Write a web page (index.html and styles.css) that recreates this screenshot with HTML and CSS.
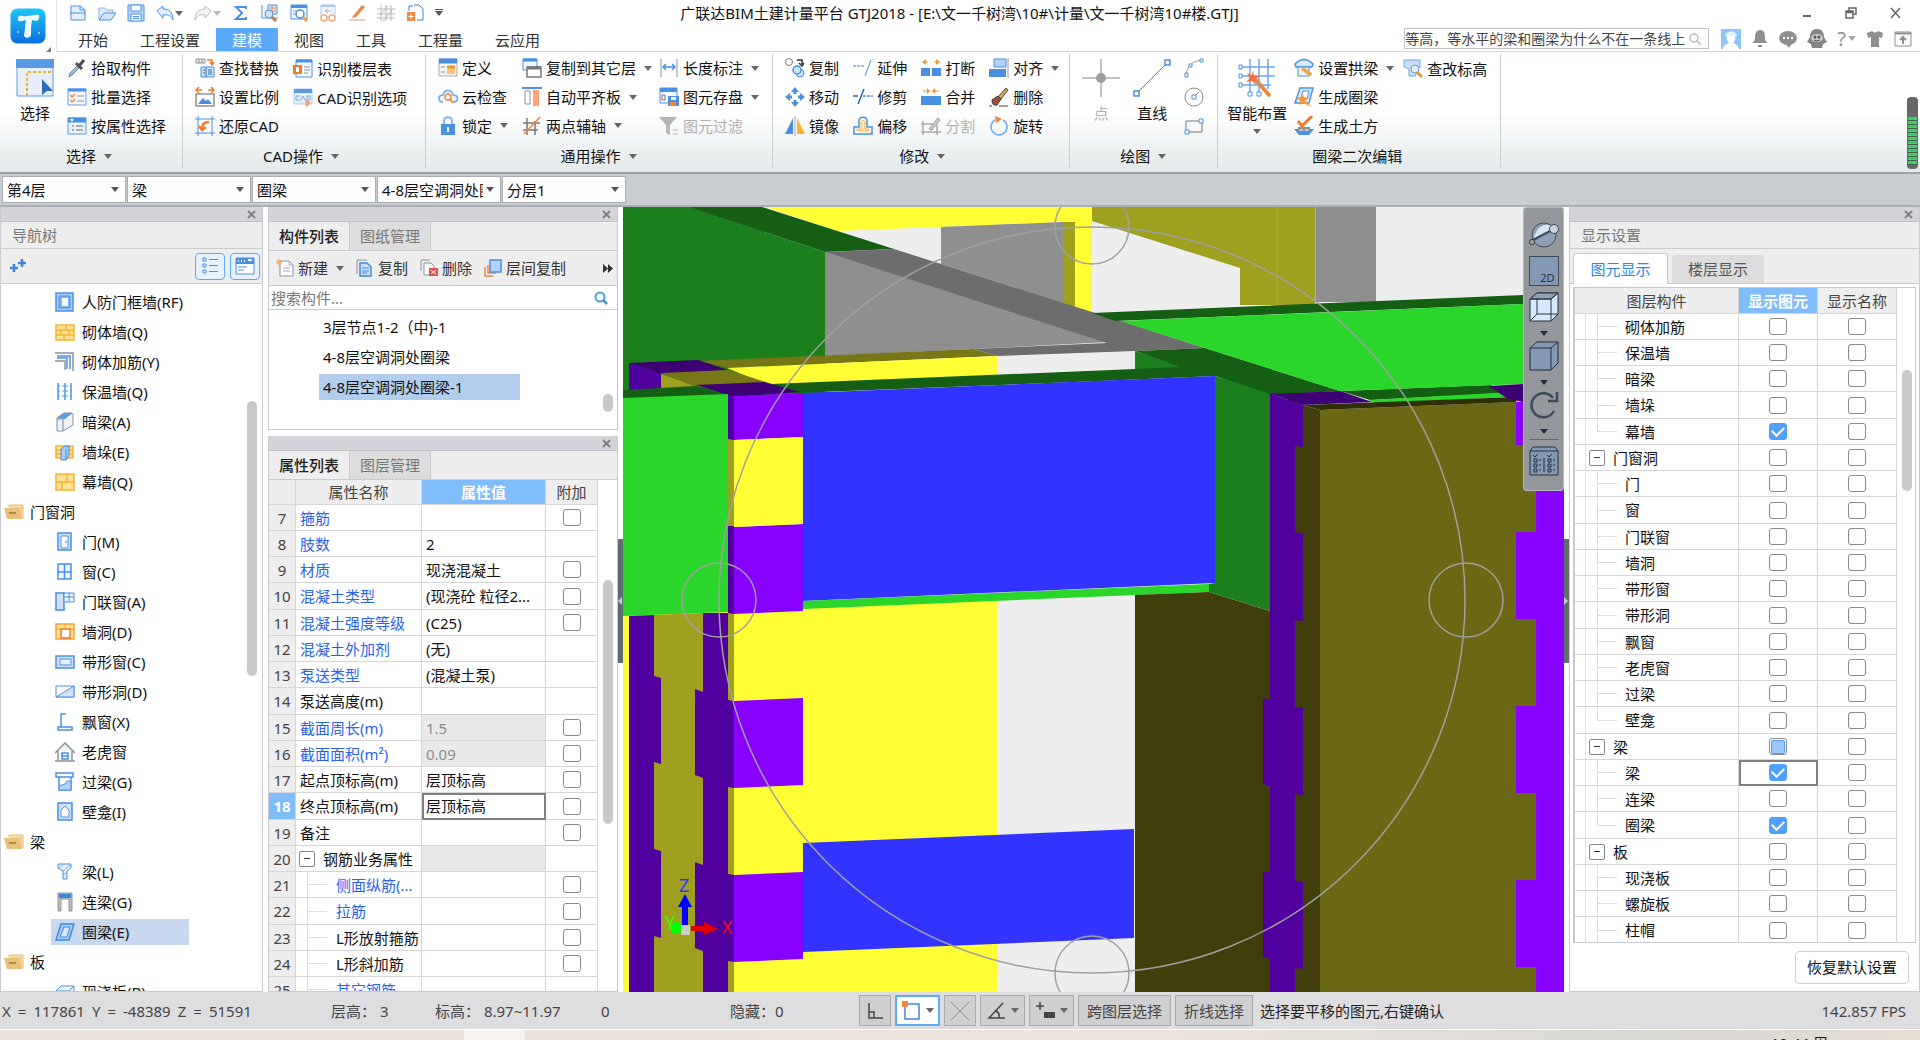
FILE: index.html
```html
<!DOCTYPE html>
<html lang="zh-CN">
<head>
<meta charset="utf-8">
<title>广联达BIM土建计量平台 GTJ2018</title>
<link rel="stylesheet" href="styles.css">
</head>
<body>
<svg class="defs" aria-hidden="true">
  <symbol id="close" viewBox="0 0 9 9"><path d="M1 1L8 8M8 1L1 8" stroke="#808080" stroke-width="2"/></symbol>
  <symbol id="folder" viewBox="0 0 20 16"><path d="M5 3V1H19V14H16" fill="#f6deb0" stroke="#e3bd76"/><path d="M9 3h10v11H8z" fill="#f1d096"/><path d="M0 4H15L18 15H3Z" fill="#e9c078"/><path d="M5 9h7" stroke="#b58a3a" stroke-width="2"/></symbol>
</svg>

<header class="top">
  <button class="logo" aria-label="应用菜单">
    <svg width="36" height="36" viewBox="0 0 36 36"><defs><linearGradient id="lg" x2="0" y2="1"><stop offset="0" stop-color="#1fc8f4"/><stop offset="1" stop-color="#0a6fe0"/></linearGradient></defs><rect x=".5" y=".5" width="35" height="35" rx="7" fill="url(#lg)"/><path d="M8 9c3-3 5 0 9-1 4 0 8-2 12-1 1 3-1 6-3 6l-4-1c-1 5-1 10-1 15-1 3-5 4-7 1 1-6 1-11 2-16-3 0-6 3-8 0z" fill="#eefaff"/><circle cx="8" cy="24" r="1" fill="#bdf"/><circle cx="29" cy="25" r="1" fill="#bdf"/></svg>
    <svg class="corner" width="5" height="5"><path d="M5 0v5H0z" fill="#777"/></svg>
  </button>
  <div class="topmain">
    <div class="titlebar">
      <div class="qat">
        <button aria-label="新建"><svg viewBox="0 0 18 18"><path d="M2 2h9l5 4v10H2z" fill="#e3effd" stroke="#4a90e2"/><path d="M1 9h16M11 2v4h5" stroke="#4a90e2" fill="none"/></svg></button>
        <button aria-label="打开"><svg viewBox="0 0 18 18"><path d="M1 16V4h6l2 2h6v3" fill="#e3effd" stroke="#7eb2ee"/><path d="M1 16L6 9h12l-5 7z" fill="#d3e5fb" stroke="#4a90e2"/></svg></button>
        <button aria-label="保存"><svg viewBox="0 0 18 18"><path d="M1 1h16v16H1z" fill="#b9d6f8" stroke="#4a90e2"/><path d="M4 1h10v6H4zM4 10h10v7H4z" fill="#fff" stroke="#4a90e2"/><path d="M6 12.500h6M6 14.500h6" stroke="#4a90e2"/></svg></button>
        <button aria-label="撤销" class="drop"><svg viewBox="0 0 18 18"><path d="M1 7l6-5v3c6 0 10 3 10 11-2-4-4-6-10-5v3z" fill="#e3effd" stroke="#4a90e2"/></svg></button>
        <button aria-label="重做" class="drop off"><svg viewBox="0 0 18 18"><path d="M17 7l-6-5v3C5 5 1 8 1 16c2-4 4-6 10-5v3z" fill="#f4f4f4" stroke="#bcbcbc"/></svg></button>
        <button aria-label="汇总计算"><svg viewBox="0 0 18 18"><path d="M14 5V3H4l6 6-6 6h10v-2" fill="none" stroke="#4a90e2" stroke-width="2"/></svg></button>
        <button aria-label="查看工程量"><svg viewBox="0 0 18 18"><path d="M1 1v13h16" stroke="#4a90e2" fill="none"/><path d="M7 1h9v9H7z" fill="#dbe9fb" stroke="#4a90e2"/><path d="M8 4h7M8 7h7M11 1v8" stroke="#f5853f"/><circle cx="8" cy="10" r="4" fill="#cfe2fa" stroke="#4a90e2"/><path d="M11 13l4 4" stroke="#c0764a" stroke-width="3"/></svg></button>
        <button aria-label="查看计算式"><svg viewBox="0 0 18 18"><path d="M1 1h16v14H1z" fill="#f4f8fe" stroke="#4a90e2"/><path d="M1 2.500h16" stroke="#4a90e2" stroke-width="3"/><path d="M3 7h4M3 10h3" stroke="#999"/><circle cx="10" cy="10" r="4" fill="#fff" stroke="#4a90e2" stroke-width="1.500"/><path d="M13 13l4 4" stroke="#f5a13f" stroke-width="3"/></svg></button>
        <button aria-label="查看报表"><svg viewBox="0 0 18 18"><path d="M2 1h14v12H2z" fill="#f4f8fe" stroke="#a9cbf3"/><path d="M2 2h14" stroke="#a9cbf3" stroke-width="2"/><path d="M6 7h7M6 7l3-2M6 7l3 2" stroke="#bbb"/><circle cx="5" cy="14" r="3" fill="#fff" stroke="#f5a97f" stroke-width="1.500"/><circle cx="13" cy="14" r="3" fill="#fff" stroke="#f5a97f" stroke-width="1.500"/></svg></button>
        <button aria-label="批注"><svg viewBox="0 0 18 18"><path d="M5 12L14 1l3 2L8 13l-4 1z" fill="#f5853f"/><path d="M1 16h16" stroke="#b7a48f"/></svg></button>
        <button aria-label="轴网"><svg viewBox="0 0 18 18"><path d="M4 1v16M9 1v16M14 1v16M0 5h18M0 10h18M0 14h18M3 11l8-9M6 17l9-11" stroke="#b9b9b9" fill="none"/></svg></button>
        <button aria-label="导出"><svg viewBox="0 0 18 18"><path d="M3 7V2h4M8 1h5l4 4v11h-6" fill="none" stroke="#4a7fc0"/><path d="M1 8h8v9H1z" fill="#f5853f"/><path d="M5 10v5M2.500 12.500h5" stroke="#fff"/></svg></button>
        <button aria-label="自定义" class="customize"></button>
      </div>
      <h1 class="title">广联达BIM土建计量平台 GTJ2018 - [E:\文一千树湾\10#\计量\文一千树湾10#楼.GTJ]</h1>
      <div class="winctl">
        <button aria-label="最小化"><svg width="16" height="16"><path d="M5 11h8" stroke="#666" stroke-width="2"/></svg></button>
        <button aria-label="还原"><svg width="16" height="16"><path d="M6 6V3h7v6h-3M3 6h7v7H3zM3 7.500h7" stroke="#666" stroke-width="1.500" fill="none"/></svg></button>
        <button aria-label="关闭"><svg width="16" height="16"><path d="M3 3l9 10M12 3L3 13" stroke="#666" stroke-width="1.500"/></svg></button>
      </div>
    </div>
    <div class="tabrow">
      <nav class="tabs">
        <a href="#">开始</a><a href="#">工程设置</a><a href="#" class="on">建模</a><a href="#">视图</a><a href="#">工具</a><a href="#">工程量</a><a href="#">云应用</a>
      </nav>
      <div class="tools">
        <div class="ask"><input type="text" aria-label="搜索" value="等高，等水平的梁和圈梁为什么不在一条线上"><svg width="14" height="14"><circle cx="6" cy="6" r="4" fill="none" stroke="#bbb" stroke-width="1.500"/><path d="M9 9l4 4" stroke="#bbb" stroke-width="1.500"/></svg></div>
        <button aria-label="用户"><svg width="20" height="20" viewBox="0 0 20 20"><path d="M0 0h20v20H0z" fill="#8ec4fb"/><path d="M2 20c0-4 4-5 6-6-4-4-3-10 2-10s6 6 2 10c2 1 6 2 6 6" fill="#fff"/><path d="M4 7c0-6 12-6 12 0z" fill="#e3f1ff"/></svg></button>
        <button aria-label="通知"><svg width="18" height="20" viewBox="0 0 18 20"><path d="M9 1c4 0 5 3 5 7s1 5 3 6H1c2-1 3-3 3-6s1-7 5-7z" fill="#8f8f8f"/><path d="M7 17h4" stroke="#8f8f8f" stroke-width="2"/></svg></button>
        <button aria-label="消息"><svg width="18" height="20" viewBox="0 0 18 20"><ellipse cx="9" cy="9" rx="9" ry="7" fill="#8f8f8f"/><path d="M6 14h7l-3 5z" fill="#8f8f8f"/><path d="M4 9h2M8 9h2M12 9h2" stroke="#fff" stroke-width="2"/></svg></button>
        <button aria-label="客服"><svg width="20" height="20" viewBox="0 0 20 20"><path d="M10 0c6 0 7 5 7 8l3 5-4 2-1 4H5l-1-4-4-2 3-5c0-3 1-8 7-8z" fill="#858585"/><ellipse cx="10" cy="9" rx="6" ry="4" fill="#ccc"/><circle cx="8" cy="8" r="1.500" fill="#555"/><circle cx="12" cy="8" r="1.500" fill="#555"/><path d="M7 11q3 2 6 0" stroke="#555" fill="none"/></svg></button>
        <button aria-label="帮助" class="help">?</button>
        <button aria-label="皮肤"><svg width="18" height="18" viewBox="0 0 18 18"><path d="M1 3l5-2q3 3 6 0l5 2-1 5-3-1v10H5V7L2 8z" fill="#8f8f8f"/></svg></button>
        <button aria-label="收起功能区"><svg width="18" height="18" viewBox="0 0 18 18"><path d="M1 2h16v14H1z" fill="none" stroke="#8f8f8f"/><path d="M1 3.500h16" stroke="#8f8f8f" stroke-width="2"/><path d="M9 14V7M6 10l3-3 3 3" stroke="#8f8f8f" stroke-width="2" fill="none"/></svg></button>
      </div>
    </div>
  </div>
</header>

<section class="ribbon">
  <div class="group pick">
    <div class="cells">
      <button class="big"><svg width="38" height="38" viewBox="0 0 38 38"><path d="M1 1h36v36H1z" fill="#e9eff8" stroke="#5a9be6"/><path d="M0 0h38v9H0z" fill="#5a9be6"/><path d="M11 37V13h26" fill="none" stroke="#f0ad2a" stroke-width="2" stroke-dasharray="3 2"/><path d="M26 20l11 12h-6l-5 4z" fill="#2f6fb8"/></svg>选择</button>
      <div class="col">
        <button><svg viewBox="0 0 20 20"><path d="M2 19l1-4 9-9 2 2-9 9z" fill="#8fc0f5" stroke="#7a8591"/><path d="M9 5l6 6M12 8l5-6" stroke="#4a4f55" stroke-width="3"/></svg>拾取构件</button>
        <button><svg viewBox="0 0 20 20"><path d="M1 2h18v16H1z" fill="#f5f9ff" stroke="#5a9be6"/><path d="M1 3h18" stroke="#4a90e2" stroke-width="3"/><path d="M3 8l2 2 3-3M3 13l2 2 3-3" stroke="#f5853f" fill="none" stroke-width="1.500"/><path d="M10 9h7M10 14h7" stroke="#8b9299"/></svg>批量选择</button>
        <button><svg viewBox="0 0 20 20"><path d="M1 2h18v16H1z" fill="#eaf2fc" stroke="#5a9be6"/><path d="M1 4h18" stroke="#4a90e2" stroke-width="5"/><path d="M3 3h4L5 6z" fill="#fff"/><path d="M5 10h2M5 14h2M9 10h7M9 14h7" stroke="#667"/></svg>按属性选择</button>
      </div>
    </div>
    <button class="cap drop">选择</button>
  </div>
  <div class="group cad">
    <div class="cells">
      <div class="col">
        <button><svg viewBox="0 0 20 20"><path d="M1 1h9v4H1zM4 1v4M7 1v4" fill="#eee" stroke="#8b9299"/><path d="M12 2h5v4M15 4l2 3 2-3" fill="none" stroke="#f07a2a" stroke-width="1.500"/><path d="M6 9h13v10H6z" fill="#cfe2fa" stroke="#4a90e2"/><path d="M11 9v10M8 12h2M8 15h2M13 12h4M13 14h4M13 16h4" stroke="#2f6fb8"/></svg>查找替换</button>
        <button><svg viewBox="0 0 20 20"><path d="M1 3h6M19 3h-6M4 0L1 3l3 3M16 0l3 3-3 3" stroke="#f07a2a" stroke-width="1.500" fill="none"/><path d="M1 7h18v12H1z" fill="#fff" stroke="#8b9299" stroke-width="1.500"/><path d="M3 17l5-6 3 3 2-2 4 5z" fill="#4a90e2"/></svg>设置比例</button>
        <button><svg viewBox="0 0 20 20"><path d="M3 0v20M17 0v20M0 3h20M0 17h20" stroke="#4a90e2"/><path d="M4 4h12v12H4z" fill="#fff"/><path d="M14 6c-4 0-7 2-7 7M4 10l3 4 4-3" stroke="#f07a2a" stroke-width="2.500" fill="none"/></svg>还原CAD</button>
      </div>
      <div class="col">
        <button><svg viewBox="0 0 20 20"><path d="M3 1h16v17H3z" fill="#f5f9ff" stroke="#4a90e2"/><path d="M3 2h16" stroke="#4a90e2" stroke-width="3"/><path d="M0 6h9v9H0z" fill="#f07a2a"/><path d="M3 8h3v5H3z" fill="#fff"/><path d="M11 8h6M11 11h6M11 14h4" stroke="#8b9299"/></svg>识别楼层表</button>
        <button><svg viewBox="0 0 20 20"><path d="M1 1h18v15H1z" fill="#e3effd" stroke="#a9cbf3"/><path d="M1 3h18" stroke="#5a9be6" stroke-width="4"/><path d="M7 8H3v4h4M8 12l2-4 2 4M14 8v4h3V8z" stroke="#7da9dc" fill="none"/><path d="M12 11l6 4-5 4z" fill="#f59a70"/></svg>CAD识别选项</button>
      </div>
    </div>
    <button class="cap drop">CAD操作</button>
  </div>
  <div class="group common">
    <div class="cells">
      <div class="col">
        <button><svg viewBox="0 0 20 20"><path d="M1 1h18v17H1z" fill="#f5f5f5" stroke="#a9adb2"/><path d="M1 3h18" stroke="#4a90e2" stroke-width="5"/><path d="M3 9h4M3 14h4" stroke="#8b9299"/><path d="M9 8h8v8H9z" fill="#f7c577"/><path d="M9 9h8" stroke="#ee9b2d" stroke-width="3"/></svg>定义</button>
        <button><svg viewBox="0 0 20 20"><path d="M5 15c-6 0-5-7 0-7 1-6 9-6 10 0 6 0 6 7 0 7" fill="#eaf3fe" stroke="#6aa7ee" stroke-width="1.500"/><circle cx="10" cy="10" r="3" fill="#fff" stroke="#f5853f" stroke-width="1.500"/><path d="M12 12l3 4" stroke="#f5853f" stroke-width="2"/></svg>云检查</button>
        <button class="drop"><svg viewBox="0 0 20 20"><path d="M6 9V5c0-5 8-5 8 0v4" fill="none" stroke="#8ab4e6" stroke-width="2"/><path d="M3 8h14v11H3z" fill="#4a90e2"/><path d="M10 11v5" stroke="#fff" stroke-width="2"/></svg>锁定</button>
      </div>
      <div class="col">
        <button class="drop"><svg viewBox="0 0 20 20"><path d="M1 1h14v11H1z" fill="#eef5fd" stroke="#4a90e2"/><path d="M1 2h14" stroke="#4a90e2" stroke-width="3"/><path d="M5 9h14v10H5z" fill="#fff" stroke="#777" stroke-width="1.500"/><path d="M5 10h14" stroke="#777" stroke-width="3"/></svg>复制到其它层</button>
        <button class="drop"><svg viewBox="0 0 20 20"><path d="M0 1h20" stroke="#4a90e2" stroke-width="2"/><path d="M3 4h5v13H3z" fill="#fff" stroke="#8b9299"/><path d="M11 3h6v16h-6z" fill="#ffa077"/></svg>自动平齐板</button>
        <button class="drop"><svg viewBox="0 0 20 20"><path d="M5 2v17M13 5v14M1 7h17M1 14h15" stroke="#777" stroke-width="1.500"/><path d="M2 18L18 1" stroke="#f5853f" stroke-width="1.500"/></svg>两点辅轴</button>
      </div>
      <div class="col">
        <button class="drop"><svg viewBox="0 0 20 20"><path d="M2 1v18M18 1v18" stroke="#8b9299"/><path d="M4 9h12M7 6L4 9l3 3M13 6l3 3-3 3" stroke="#4a90e2" stroke-width="1.500" fill="none"/></svg>长度标注</button>
        <button class="drop"><svg viewBox="0 0 20 20"><path d="M1 1h17v15H1z" fill="#f5f9ff" stroke="#4a90e2"/><path d="M1 3h17" stroke="#4a90e2" stroke-width="4"/><path d="M3 8h3v5H3z" fill="none" stroke="#777"/><path d="M9 9h11v10H9z" fill="#4a90e2"/><path d="M12 10h5v3h-5z" fill="#fff"/><path d="M11 15h6v4h-6z" fill="#f5853f"/></svg>图元存盘</button>
        <button class="off" disabled><svg viewBox="0 0 20 20"><path d="M0 1h18l-7 8v10l-4-2V9z" fill="#b5b5b5"/><path d="M14 14h5M14 18h5" stroke="#b5b5b5"/></svg>图元过滤</button>
      </div>
    </div>
    <button class="cap drop">通用操作</button>
  </div>
  <div class="group modify">
    <div class="cells">
      <div class="col">
        <button><svg viewBox="0 0 20 20"><circle cx="4" cy="4" r="3.500" fill="#fff" stroke="#777"/><path d="M12 2h5v4M14 5l3 3 2-3" stroke="#333" fill="none" stroke-width="1.500"/><circle cx="15" cy="15" r="4" fill="#cfe6fb" stroke="#4a90e2"/><circle cx="12" cy="12" r="4" fill="#cfe6fb" stroke="#4a90e2" stroke-width="1.500"/></svg>复制</button>
        <button><svg viewBox="0 0 20 20"><path d="M10 0l4 5H6zM10 20l4-5H6zM0 10l5-4v8zM20 10l-5-4v8z" fill="#4a90e2"/><path d="M10 4v3M10 13v3M4 10h3M13 10h3" stroke="#4a90e2" stroke-width="3"/></svg>移动</button>
        <button><svg viewBox="0 0 20 20"><path d="M8 2v16H0z" fill="#4a90e2"/><path d="M12 2v16h8z" fill="#f7b52f"/><path d="M10 0v20" stroke="#aaa"/></svg>镜像</button>
      </div>
      <div class="col">
        <button><svg viewBox="0 0 20 20"><path d="M0 8h12" stroke="#7aabea" stroke-width="1.500" stroke-dasharray="3 1"/><path d="M12 18l6-16" stroke="#4a90e2"/></svg>延伸</button>
        <button><svg viewBox="0 0 20 20"><path d="M0 9h5M5 17l6-15" stroke="#2a5f9f" stroke-width="1.500"/><path d="M10 9h10" stroke="#4a90e2" stroke-width="1.500" stroke-dasharray="3 1"/></svg>修剪</button>
        <button><svg viewBox="0 0 20 20"><path d="M1 18h18v-7h-5V5c0-5-8-5-8 0v6H1z" fill="#fff" stroke="#4a90e2" stroke-width="1.500"/><path d="M4 15h12v-2h-4V6c0-2-4-2-4 0v7H4z" fill="#ffe9b8" stroke="#f0b545"/></svg>偏移</button>
      </div>
      <div class="col">
        <button><svg viewBox="0 0 20 20"><path d="M5 1L1 4l4 3zM15 1l4 3-4 3z" fill="#f0932f"/><path d="M4 4h3M13 4h3" stroke="#f0932f"/><path d="M0 10h9v8H0zM11 10h9v8h-9z" fill="#4a90e2"/></svg>打断</button>
        <button><svg viewBox="0 0 20 20"><path d="M6 1l3 3-3 3zM14 1l-3 3 3 3z" fill="#f0932f"/><path d="M2 4h5M13 4h5" stroke="#f0932f"/><path d="M0 9h20v9H0z" fill="#4a90e2"/></svg>合并</button>
        <button class="off" disabled><svg viewBox="0 0 20 20"><path d="M2 5v14M16 9v10M0 8h12M0 16h20" stroke="#aaa" stroke-width="1.500"/><path d="M8 13L17 2l2 2-8 10z" fill="#ccc" stroke="#999"/></svg>分割</button>
      </div>
      <div class="col">
        <button class="drop"><svg viewBox="0 0 20 20"><path d="M5 1h12v8H5z" fill="#b4d3f8" stroke="#4a90e2"/><path d="M0 11h17v8H0z" fill="#4a90e2"/><path d="M19 0v20" stroke="#999"/></svg>对齐</button>
        <button><svg viewBox="0 0 20 20"><path d="M9 10l8-9 2 2-7 9z" fill="#d8a45a" stroke="#444"/><path d="M3 13l6-4 3 3-4 6q-5 1-5-5z" fill="#a3542b" stroke="#333"/><path d="M0 19h3M10 19h9" stroke="#444"/></svg>删除</button>
        <button><svg viewBox="0 0 20 20"><path d="M6 4a8 8 0 1 0 8 0" fill="none" stroke="#6fa9ec" stroke-width="1.500"/><path d="M6 0l7 3-6 4z" fill="#f5853f"/></svg>旋转</button>
      </div>
    </div>
    <button class="cap drop">修改</button>
  </div>
  <div class="group draw">
    <div class="cells">
      <button class="big off" disabled><svg width="38" height="38" viewBox="0 0 38 38"><path d="M19 0v38M0 19h38" stroke="#c2c2c2" stroke-width="2"/><circle cx="19" cy="19" r="5" fill="#9c9c9c"/></svg>点</button>
      <button class="big"><svg width="38" height="38" viewBox="0 0 38 38"><path d="M4 34L34 4" stroke="#777"/><path d="M1 32h5v5H1zM32 1h5v5h-5z" fill="#fff" stroke="#4a90e2" stroke-width="1.500"/></svg>直线</button>
      <div class="col">
        <button aria-label="弧"><svg viewBox="0 0 20 20"><path d="M2 17C3 8 8 4 17 2" stroke="#999" fill="none"/><path d="M1 15h3v4H1zM16 1h3v3h-3zM5 6h3v3H5z" fill="#fff" stroke="#4a90e2"/></svg></button>
        <button aria-label="圆"><svg viewBox="0 0 20 20"><circle cx="10" cy="10" r="9" fill="none" stroke="#888"/><path d="M10 10l5-5" stroke="#888"/><path d="M8 8h4v4H8z" fill="#fff" stroke="#4a90e2"/></svg></button>
        <button aria-label="矩形"><svg viewBox="0 0 20 20"><path d="M2 5h16v11H2z" fill="none" stroke="#777"/><path d="M1 14h4v4H1zM15 3h4v4h-4z" fill="#fff" stroke="#4a90e2"/></svg></button>
      </div>
    </div>
    <button class="cap drop">绘图</button>
  </div>
  <div class="group edit">
    <div class="cells">
      <button class="big more"><svg width="38" height="38" viewBox="0 0 38 38"><path d="M12 0v36M21 0v36M30 0v30M3 8h34M3 17h34M3 26h30" stroke="#6aa7ee" stroke-width="1.500"/><path d="M1 6h3v4H1zM1 15h3v4H1zM1 24h3v4H1zM10 33h4v4h-4zM19 33h4v4h-4z" fill="#fff" stroke="#4a90e2"/><path d="M16 19l16 18" stroke="#e08a45" stroke-width="4"/><path d="M15 11l1 6 6 0-5 3 1 6-4-4-6 1 4-4-3-5 5 2z" fill="#f5703f"/></svg>智能布置</button>
      <div class="col">
        <button class="drop"><svg viewBox="0 0 20 20"><path d="M1 6q9-9 18 0l-1 3H2z" fill="#d9e9fc" stroke="#4a90e2" stroke-width="1.500"/><path d="M4 9h11v9H4z" fill="#eef5fd" stroke="#4a90e2"/><path d="M8 10l9 7" stroke="#f0a545" stroke-width="4"/></svg>设置拱梁</button>
        <button><svg viewBox="0 0 20 20"><path d="M6 1h13l-4 15H1z" fill="#d9e9fc" stroke="#4a90e2" stroke-width="1.500"/><path d="M9 4h6l-2 8H7z" fill="#fff" stroke="#4a90e2"/><path d="M8 6l2 4 5 1-4 3 7 6-9-4-3 2 0-5-4-2 5-1z" fill="#f29a3a"/></svg>生成圈梁</button>
        <button><svg viewBox="0 0 20 20"><path d="M4 5l4 5L18 0" stroke="#f07a2a" stroke-width="3" fill="none"/><path d="M0 13h20l-5 6H5z" fill="#4a90e2"/><path d="M4 11h12v5H4z" fill="#8b9299"/><path d="M6 14h3M11 14h3" stroke="#fff"/></svg>生成土方</button>
      </div>
      <div class="col">
        <button><svg viewBox="0 0 20 20"><path d="M1 1h16v7l-4 2v7H6v-7L1 8z" fill="#c9dff8" stroke="#6aa7ee"/><circle cx="12" cy="10" r="4" fill="#e6f0fb" stroke="#6b9bd2"/><path d="M14 13l5 5" stroke="#f0932f" stroke-width="3"/></svg>查改标高</button>
      </div>
    </div>
    <div class="cap">圈梁二次编辑</div>
  </div>
  <div class="meter" aria-hidden="true"><i></i></div>
</section>

<section class="combos">
  <label><select aria-label="楼层"><option>第4层</option></select></label>
  <label><select aria-label="构件类别"><option>梁</option></select></label>
  <label><select aria-label="构件类型"><option>圈梁</option></select></label>
  <label><select aria-label="构件"><option>4-8层空调洞处圈梁-1</option></select></label>
  <label><select aria-label="分层"><option>分层1</option></select></label>
</section>

<main class="work">
  <aside class="panel nav">
    <div class="strip"><button aria-label="关闭"><svg width="9" height="9"><use href="#close"/></svg></button></div>
    <h2 class="phead">导航树</h2>
    <div class="ntools">
      <button aria-label="全部展开" class="plus"><svg width="16" height="14" viewBox="0 0 16 14"><path d="M4 5v8M0 9h8M12 0v8M8 4h8" stroke="#3f87dc" stroke-width="2.500"/></svg></button>
      <button aria-label="列表" class="tg"><svg width="18" height="18" viewBox="0 0 18 18"><path d="M2 1h3v3H2zM2 7h3v3H2zM2 13h3v3H2zM8 2.500h9M8 8.500h9M8 14.500h9" stroke="#4a90e2" fill="none"/></svg></button>
      <button aria-label="面板" class="tg"><svg width="20" height="18" viewBox="0 0 20 18"><path d="M1 1h18v16H1z" fill="#fff" stroke="#4a90e2"/><path d="M1 1h18v6H1z" fill="#4a90e2"/><path d="M3 4h1M6 4h1M9 4h1M13 3h4" stroke="#fff" stroke-width="2"/><path d="M3 10h9M3 13h6" stroke="#4a90e2"/></svg></button>
    </div>
    <ul class="tree">
      <li><svg viewBox="0 0 20 20"><path d="M1 1h17v18H1z" fill="#a9cdf6" stroke="#4a90e2" stroke-width="1.500"/><path d="M4 4h11v12H4z" fill="#7fb2ee" stroke="#4a90e2"/><path d="M7 6h6v8H7z" fill="#fff"/></svg>人防门框墙(RF)</li>
      <li><svg viewBox="0 0 20 20"><path d="M1 3h18v15H1z" fill="#ffe19a" stroke="#f7b52f" stroke-width="1.500"/><path d="M1 8h18M1 13h18M11 3v5M6 8v5M14 8v5M9 13v5" stroke="#f7b52f" stroke-width="1.500"/></svg>砌体墙(Q)</li>
      <li><svg viewBox="0 0 20 20"><path d="M0 1h18v18M0 9h10v9" stroke="#8b9299" stroke-width="1.500" fill="none"/><path d="M2 4h13v13M2 6h10v11" stroke="#4a90e2" stroke-width="1.500" fill="none"/></svg>砌体加筋(Y)</li>
      <li><svg viewBox="0 0 20 20"><path d="M3 1v17M10 1v17M16 1v17" stroke="#4a90e2" stroke-width="1.500"/><path d="M3 4h13M3 9h13M3 14h13" stroke="#4a90e2" stroke-dasharray="2 2"/></svg>保温墙(Q)</li>
      <li><svg viewBox="0 0 20 20"><path d="M2 6l7-5h8l1 1v11L8 19H2z" fill="#eef2f6" stroke="#8b9299"/><path d="M2 6l7-5h8l-7 6z" fill="#5a9be6"/><path d="M8 8v11M2 7h6l9-6" stroke="#6b8cb2" fill="none"/></svg>暗梁(A)</li>
      <li><svg viewBox="0 0 20 20"><path d="M1 4h17v12H1z" fill="#ffe19a" stroke="#f7b52f" stroke-width="1.500"/><path d="M1 8h17M1 12h17" stroke="#f7b52f" stroke-width="1.500"/><path d="M6 7l4-3h4v10l-3 4H6z" fill="#a9cdf6" stroke="#3f87dc"/><path d="M11 7v10" stroke="#3f87dc"/></svg>墙垛(E)</li>
      <li><svg viewBox="0 0 20 20"><path d="M1 2h18v16H1z" fill="#ffe19a" stroke="#f7b52f" stroke-width="1.500"/><path d="M1 10h18M12 2v8M7 10v8" stroke="#f7b52f" stroke-width="1.500"/></svg>幕墙(Q)</li>
      <li class="dir"><svg><use href="#folder"/></svg>门窗洞</li>
      <li><svg viewBox="0 0 20 20"><path d="M3 1h13v17H3z" fill="#cfe2fa" stroke="#4a90e2" stroke-width="1.500"/><path d="M6 4h7v12H6z" fill="#fff" stroke="#4a90e2"/><path d="M11 9v2" stroke="#2f6fb8"/></svg>门(M)</li>
      <li><svg viewBox="0 0 20 20"><path d="M3 2h13v15H3zM9.500 2v15M3 10h13" fill="#eef5fd" stroke="#4a90e2" stroke-width="1.500"/></svg>窗(C)</li>
      <li><svg viewBox="0 0 20 20"><path d="M1 1h8v17H1z" fill="#cfe2fa" stroke="#4a90e2" stroke-width="1.500"/><path d="M9 1h10v9H9zM14 1v9M9 5h10" fill="#eef5fd" stroke="#4a90e2"/></svg>门联窗(A)</li>
      <li><svg viewBox="0 0 20 20"><path d="M1 2h18v15H1z" fill="#ffe19a" stroke="#f7a52f" stroke-width="1.500"/><path d="M1 7h18M10 2v5" stroke="#f7a52f"/><path d="M6 7h9v9H6z" fill="#fff" stroke="#f07a2a" stroke-width="1.500"/></svg>墙洞(D)</li>
      <li><svg viewBox="0 0 20 20"><path d="M1 4h18v12H1z" fill="#cfe2fa" stroke="#4a90e2" stroke-width="1.500"/><path d="M5 7h11v6H5z" fill="#e6f1fd" stroke="#4a90e2"/></svg>带形窗(C)</li>
      <li><svg viewBox="0 0 20 20"><path d="M1 4h18v11H1z" fill="#fff" stroke="#4a90e2"/><path d="M1 15L19 4v11z" fill="#cfe2fa" stroke="#4a90e2"/></svg>带形洞(D)</li>
      <li><svg viewBox="0 0 20 20"><path d="M11 2H6v13M3 15h14v3H3z" fill="none" stroke="#4a90e2" stroke-width="1.500"/></svg>飘窗(X)</li>
      <li><svg viewBox="0 0 20 20"><path d="M0 11l10-10 10 10M3 9v10h14V9M0 19h20" fill="#f3f5f7" stroke="#8b9299" stroke-width="1.500"/><path d="M7 11h6v6H7zM7 14h6" fill="#fff" stroke="#4a90e2" stroke-width="1.500"/></svg>老虎窗</li>
      <li><svg viewBox="0 0 20 20"><path d="M1 1h17v4H1zM4 5h12v13H4z" fill="#fff" stroke="#4a90e2" stroke-width="1.500"/><path d="M4 14l6-2 2-3h4v9H4z" fill="#b4d3f8" stroke="#4a90e2"/></svg>过梁(G)</li>
      <li><svg viewBox="0 0 20 20"><path d="M3 1h14v17H3z" fill="#cfe2fa" stroke="#4a90e2" stroke-width="1.500"/><path d="M6 15V8l4-4 4 4v7z" fill="#fff" stroke="#4a90e2"/></svg>壁龛(I)</li>
      <li class="dir"><svg><use href="#folder"/></svg>梁</li>
      <li><svg viewBox="0 0 20 20"><path d="M3 2h13v4l-4 3v8H8V9L3 6z" fill="#e6f1fd" stroke="#4a90e2"/><path d="M4 6l5-4M8 9l7-6M8 13l4-3" stroke="#7aabea"/></svg>梁(L)</li>
      <li><svg viewBox="0 0 20 20"><path d="M3 1h14v18h-3V7H6v12H3z" fill="#b8bdc3" stroke="#8b9299"/><path d="M4 2h12v4H4z" fill="#3f87dc"/></svg>连梁(G)</li>
      <li class="sel"><svg viewBox="0 0 20 20"><path d="M6 2h13l-5 16H1z" fill="#a9cdf6" stroke="#3f87dc" stroke-width="1.500"/><path d="M9 5h6l-3 10H5z" fill="#dbe8f8" stroke="#3f87dc"/></svg>圈梁(E)</li>
      <li class="dir"><svg><use href="#folder"/></svg>板</li>
      <li><svg viewBox="0 0 20 20"><path d="M1 9l5-5h13v5l-5 6H1z" fill="#eef5fd" stroke="#4a90e2"/><path d="M1 9h13l5-5" fill="none" stroke="#4a90e2"/></svg>现浇板(B)</li>
    </ul>
    <i class="bar"></i>
  </aside>

  <div class="mid">
    <section class="panel list">
      <div class="strip"><button aria-label="关闭"><svg width="9" height="9"><use href="#close"/></svg></button></div>
      <div class="ptabs"><button class="on">构件列表</button><button>图纸管理</button></div>
      <div class="ltools">
        <button class="drop"><svg viewBox="0 0 18 18"><path d="M4 2h9l4 4v11H4z" fill="#fff" stroke="#8b9299"/><path d="M13 2v4h4M7 9h7M7 12h7" stroke="#aab" fill="none"/><path d="M3 0v6M0 3h6M1 1l4 4M5 1L1 5" stroke="#f5a13f"/></svg>新建</button>
        <button><svg viewBox="0 0 18 18"><path d="M1 15V1h10" stroke="#8b9299" fill="none"/><path d="M4 4h7l4 4v9H4z" fill="#cfe2fa" stroke="#3f87dc" stroke-width="1.500"/><path d="M6 9h7M6 12h7M6 14h5" stroke="#3f87dc"/></svg>复制</button>
        <button><svg viewBox="0 0 18 18"><path d="M1 12V1h9" stroke="#8b9299" fill="none"/><path d="M4 4h7l3 3v9H4z" fill="#fff" stroke="#8b9299"/><path d="M9 9h9v8H9z" fill="#e05252"/><path d="M11 11l5 4M16 11l-5 4" stroke="#fff"/></svg>删除</button>
        <button><svg viewBox="0 0 18 18"><path d="M1 8v9h8M4 6v8h8" stroke="#f5853f" fill="none" stroke-width="1.500"/><path d="M6 1h11v12H6z" fill="#b4d3f8" stroke="#4a90e2" stroke-width="1.500"/></svg>层间复制</button>
        <button class="over" aria-label="更多"><svg width="10" height="9" viewBox="0 0 10 9"><path d="M0 0l5 4.500L0 9zM5 0l5 4.500L5 9z" fill="#333"/></svg></button>
      </div>
      <div class="find"><input type="text" aria-label="搜索构件" placeholder="搜索构件..."><svg width="14" height="14"><circle cx="6" cy="6" r="4.500" fill="none" stroke="#4aa0d8" stroke-width="2"/><path d="M9 9l4 4" stroke="#4a90c2" stroke-width="2.500"/></svg></div>
      <ul class="items"><li>3层节点1-2（中)-1</li><li>4-8层空调洞处圈梁</li><li class="sel">4-8层空调洞处圈梁-1</li></ul>
      <i class="bar"></i>
    </section>
    <section class="panel props">
      <div class="strip"><button aria-label="关闭"><svg width="9" height="9"><use href="#close"/></svg></button></div>
      <div class="ptabs"><button class="on">属性列表</button><button>图层管理</button></div>
      <div class="scroll">
      <table class="ptable">
        <colgroup><col class="c1"><col class="c2"><col class="c3"><col class="c4"></colgroup>
        <thead><tr><th></th><th>属性名称</th><th class="hot">属性值</th><th>附加</th></tr></thead>
        <tbody>
        <tr><th>7</th><td class="b">箍筋</td><td></td><td><input type="checkbox" aria-label="箍筋 附加"></td></tr>
        <tr><th>8</th><td class="b">肢数</td><td>2</td><td></td></tr>
        <tr><th>9</th><td class="b">材质</td><td>现浇混凝土</td><td><input type="checkbox" aria-label="材质 附加"></td></tr>
        <tr><th>10</th><td class="b">混凝土类型</td><td>(现浇砼 粒径2...</td><td><input type="checkbox" aria-label="混凝土类型 附加"></td></tr>
        <tr><th>11</th><td class="b">混凝土强度等级</td><td>(C25)</td><td><input type="checkbox" aria-label="混凝土强度等级 附加"></td></tr>
        <tr><th>12</th><td class="b">混凝土外加剂</td><td>(无)</td><td></td></tr>
        <tr><th>13</th><td class="b">泵送类型</td><td>(混凝土泵)</td><td></td></tr>
        <tr><th>14</th><td>泵送高度(m)</td><td></td><td></td></tr>
        <tr><th>15</th><td class="b">截面周长(m)</td><td class="ro">1.5</td><td><input type="checkbox" aria-label="截面周长 附加"></td></tr>
        <tr><th>16</th><td class="b">截面面积(m²)</td><td class="ro">0.09</td><td><input type="checkbox" aria-label="截面面积 附加"></td></tr>
        <tr><th>17</th><td>起点顶标高(m)</td><td>层顶标高</td><td><input type="checkbox" aria-label="起点顶标高 附加"></td></tr>
        <tr><th class="hot">18</th><td>终点顶标高(m)</td><td class="cur">层顶标高</td><td><input type="checkbox" aria-label="终点顶标高 附加"></td></tr>
        <tr><th>19</th><td>备注</td><td></td><td><input type="checkbox" aria-label="备注 附加"></td></tr>
        <tr><th>20</th><td class="par"><div><button class="fold" aria-label="折叠"></button>钢筋业务属性</div></td><td class="ro"></td><td></td></tr>
        <tr><th>21</th><td class="b kid">侧面纵筋(...</td><td></td><td><input type="checkbox" aria-label="侧面纵筋 附加"></td></tr>
        <tr><th>22</th><td class="b kid">拉筋</td><td></td><td><input type="checkbox" aria-label="拉筋 附加"></td></tr>
        <tr><th>23</th><td class="kid">L形放射箍筋</td><td></td><td><input type="checkbox" aria-label="L形放射箍筋 附加"></td></tr>
        <tr><th>24</th><td class="kid">L形斜加筋</td><td></td><td><input type="checkbox" aria-label="L形斜加筋 附加"></td></tr>
        <tr><th>25</th><td class="b kid">其它钢筋</td><td></td><td></td></tr>
        </tbody>
      </table>
      </div>
      <i class="bar"></i>
    </section>
  </div>

  <button class="grip" aria-label="折叠左侧"><svg width="4" height="8"><path d="M4 0v8L0 4z" fill="#c8ccd0"/></svg></button>

  <section class="view" aria-label="三维视图">
    <svg class="scene" viewBox="623 207 941 785" preserveAspectRatio="xMidYMid slice">
      <path fill="#eee" d="M623 207h941v785H623z"/>
      <path fill="#1b7f1b" d="M623 207h66l136 45v148H623z"/>
      <path fill="#ff3" d="M765 207h327v106l-29-10V222L838 231z"/>
      <path fill="#8f8f8f" d="M941 227l122-5v81l-122-39z"/>
      <path fill="#9f9f20" d="M1063 222h12v86l-12-5z"/>
      <path fill="#145f14" d="M688 207h74l132 42-69 3z"/>
      <path fill="#9f9f20" d="M1092 207h223v98h-75v-37l-148-47z"/>
      <path stroke="#b0b028" d="M1277 207v98M1315 207v95"/>
      <path fill="#8f8f8f" d="M1315.500 207h60.500v95h-60.500z"/>
      <path fill="#8f8f8f" d="M825 252l285 90-137 7-148 7z"/>
      <path fill="#6d6d6d" d="M825 252l69-3 198 63 29 9 84 27-70 3-138 5-24-7 134-6z"/>
      <path fill="#777718" d="M698 361l275-12 24 7-268 12z"/>
      <path fill="#ff3" d="M727 368l270-12v20l-227 10z"/>
      <path fill="#1b7f1b" d="M1135 351l70 24-70-5z"/>
      <path fill="#145f14" d="M771 384l364-15 45-2-45-16 70-3 135 43-70 4-55-19-115 5-305 12z"/>
      <path fill="#3e0075" d="M629 363l69-3 30 10-67 4z"/>
      <path fill="#50009f" d="M629 363l32 11v16h-32z"/>
      <path fill="#9f9f20" d="M661 374l36 12v3l-36 1z"/>
      <path fill="#777718" d="M661 373l67-3 44 14-76 3z"/>
      <path fill="#145f14" d="M623 390l73-4 34 10-107 4z"/>
      <path fill="#3e0075" d="M696 385l68-3 36 10-66 5z"/>
      <path fill="#29d629" d="M623 398l105-4v219l-105 4z"/>
      <path fill="#ff3" d="M623 616l105-4 75-4 194-8v392H623z"/>
      <path fill="#9f9f20" d="M728 395h6v597h-6zM654 615l49-2v379h-49z"/>
      <path fill="#50009f" d="M728 395h6v45l-6-1zM728 526h6v88l-6-1zM728 700l6 1v87l-6-1zM728 874l6 1v87l-6-1zM629 616l25-1v61l7 2v86l-7-2v87l7 2v87l-7-2v56h-25zM703 613h25v379h-25v-41l-8-3v-86l8 3v-87l-8-3v-86l8 3z"/>
      <path fill="#80f" d="M734 396l69-3v44l-69 3zM734 527l69-3v87l-69 3zM734 701l69-3v87l-69 3zM734 875l69-3v87l-69 3z"/>
      <path fill="#ff3" d="M734 440l69-3v87l-69 3z"/>
      <path fill="#33f" d="M803 393l412-17v207l-412 18zM803 843l331-14v109l-331 14z"/>
      <path fill="#29d629" d="M803 601l406-17v8l-406 17z"/>
      <path fill="#403f0c" d="M1135 595l74-3 61 19V400h20l13 5 17 5v582h-185z"/>
      <path fill="#1b7f1b" d="M1215 376l55 18v217l-61-19v-8l6-1z"/>
      <path fill="#6a6814" d="M1320 410l244-10v592h-244z"/>
      <path fill="#145f14" d="M1092 313l431-18v9l-408 17zM1340 391l150-6 22 8-142 7z"/>
      <path fill="#29d629" d="M1120 321l403-17v80l-183 7zM1368 400l144-8v5l-137 6z"/>
      <path fill="#50009f" d="M1270 394l33 11v42l-8-1v86l8 2v87l-8-1v87l8 1v87l-8-1v87l8 1v87l-8-1v24h-25v-33l-7-2v-86l7 2v-87l-7-2v-86l7 2z"/>
      <path fill="#302f08" d="M1303 405l213-8v5l-196 8z"/>
      <path fill="#3e0075" d="M1270 394l70-3 32 11-69 3zM1489 386l34-2v18l-15-3z"/>
      <path fill="#80f" d="M1516 402h48v590h-28v-25h-20v-87h20v-87h-20v-87h20v-87h-20v-87h20v-87h-20z"/>
      <g fill="none" stroke="#a0a0a0" stroke-width="1.500"><circle cx="1092" cy="600" r="373"/><circle cx="1092" cy="227" r="37"/><circle cx="719" cy="600" r="37"/><circle cx="1466" cy="600" r="37"/><circle cx="1092" cy="973" r="37"/></g>
      <path fill="#00f" d="M682 925v-18h-4l7-13 7 13h-4v18z"/>
      <path fill="#e00000" d="M691 926h13v-4l14 7-14 6v-4h-13z"/>
      <circle cx="676" cy="928" r="6" fill="#0f0"/>
      <path fill="#ccc" d="M681 925h9v10h-9z"/>
      <text x="679" y="892" fill="#33f" class="axis">Z</text><text x="722" y="934" fill="#f01010" class="axis">X</text><text x="665" y="929" fill="#3f0" class="axis">Y</text>
    </svg>
    <div class="vtools">
      <button aria-label="动态观察"><svg width="30" height="30" viewBox="0 0 30 30"><circle cx="15" cy="15" r="12" fill="#8da0b5" stroke="#3d4a5a"/><path d="M5 18C8 4 18 4 22 6c-3 8-10 12-17 12z" fill="#dbe5f0"/><path d="M2 21L25 9" stroke="#3d4a5a" stroke-width="2"/><circle cx="25" cy="9" r="4.500" fill="#c5d3e2" stroke="#3d4a5a"/><circle cx="3" cy="22" r="2.500" fill="#aaa" stroke="#333"/></svg></button>
      <button class="two">2D</button>
      <button class="v" aria-label="线框"><svg width="30" height="30" viewBox="0 0 30 30"><path d="M1 7l7-6h21v21l-7 7H1z" fill="#d6e9ff" stroke="#26313f"/><path d="M1 7l7-6h21l-7 6z" fill="#8da0b5" stroke="#26313f"/><path d="M1 7h21v22M22 7l7-6M8 7v15h21M1 29l7-7" fill="none" stroke="#26313f"/></svg></button>
      <button class="v" aria-label="实体"><svg width="30" height="30" viewBox="0 0 30 30"><path d="M1 7l7-6h21v21l-7 7H1z" fill="#8499b3" stroke="#26313f"/><path d="M1 7h21v22M22 7l7-6" fill="none" stroke="#26313f"/></svg></button>
      <button class="v" aria-label="旋转"><svg width="30" height="30" viewBox="0 0 30 30"><path d="M25 21A12 12 0 1 1 24 8" fill="none" stroke="#3d4a5a" stroke-width="2.500"/><path d="M28 2v9h-9" fill="none" stroke="#3d4a5a" stroke-width="2.500"/></svg></button>
      <button class="last" aria-label="显示设置"><svg width="30" height="30" viewBox="0 0 30 30"><path d="M1 5l3-4h22l3 4v24H1z" fill="#8499b3" stroke="#26313f"/><path d="M1 5h28M15 12v14" stroke="#26313f"/><path d="M4 9l2 2 3-3M18 9l2 2 3-3M5 13h3v3H5zM5 18h3v3H5zM5 23h3v3H5zM19 13h3v3h-3zM19 18h3v3h-3zM19 23h3v3h-3zM10 14h2M10 19h2M10 24h2M24 14h2M24 19h2M24 24h2" fill="none" stroke="#26313f"/></svg></button>
    </div>
  </section>

  <button class="grip" aria-label="折叠右侧"><svg width="4" height="8"><path d="M0 0v8l4-4z" fill="#c8ccd0"/></svg></button>

  <aside class="panel disp">
    <div class="strip"><button aria-label="关闭"><svg width="9" height="9"><use href="#close"/></svg></button></div>
    <h2 class="phead">显示设置</h2>
    <div class="dtabs"><button class="on">图元显示</button><button>楼层显示</button></div>
    <div class="dbox">
      <table class="dtable">
        <colgroup><col class="d1"><col class="d2"><col class="d2"></colgroup>
        <thead><tr><th>图层构件</th><th class="hot">显示图元</th><th>显示名称</th></tr></thead>
        <tbody>
        <tr><td class="leaf">砌体加筋</td><td><input type="checkbox" aria-label="砌体加筋 图元"></td><td><input type="checkbox" aria-label="砌体加筋 名称"></td></tr>
        <tr><td class="leaf">保温墙</td><td><input type="checkbox" aria-label="保温墙 图元"></td><td><input type="checkbox" aria-label="保温墙 名称"></td></tr>
        <tr><td class="leaf">暗梁</td><td><input type="checkbox" aria-label="暗梁 图元"></td><td><input type="checkbox" aria-label="暗梁 名称"></td></tr>
        <tr><td class="leaf">墙垛</td><td><input type="checkbox" aria-label="墙垛 图元"></td><td><input type="checkbox" aria-label="墙垛 名称"></td></tr>
        <tr><td class="leaf end">幕墙</td><td><input type="checkbox" checked aria-label="幕墙 图元"></td><td><input type="checkbox" aria-label="幕墙 名称"></td></tr>
        <tr><td class="node"><div><button class="fold" aria-label="折叠"></button>门窗洞</div></td><td><input type="checkbox" aria-label="门窗洞 图元"></td><td><input type="checkbox" aria-label="门窗洞 名称"></td></tr>
        <tr><td class="leaf">门</td><td><input type="checkbox" aria-label="门 图元"></td><td><input type="checkbox" aria-label="门 名称"></td></tr>
        <tr><td class="leaf">窗</td><td><input type="checkbox" aria-label="窗 图元"></td><td><input type="checkbox" aria-label="窗 名称"></td></tr>
        <tr><td class="leaf">门联窗</td><td><input type="checkbox" aria-label="门联窗 图元"></td><td><input type="checkbox" aria-label="门联窗 名称"></td></tr>
        <tr><td class="leaf">墙洞</td><td><input type="checkbox" aria-label="墙洞 图元"></td><td><input type="checkbox" aria-label="墙洞 名称"></td></tr>
        <tr><td class="leaf">带形窗</td><td><input type="checkbox" aria-label="带形窗 图元"></td><td><input type="checkbox" aria-label="带形窗 名称"></td></tr>
        <tr><td class="leaf">带形洞</td><td><input type="checkbox" aria-label="带形洞 图元"></td><td><input type="checkbox" aria-label="带形洞 名称"></td></tr>
        <tr><td class="leaf">飘窗</td><td><input type="checkbox" aria-label="飘窗 图元"></td><td><input type="checkbox" aria-label="飘窗 名称"></td></tr>
        <tr><td class="leaf">老虎窗</td><td><input type="checkbox" aria-label="老虎窗 图元"></td><td><input type="checkbox" aria-label="老虎窗 名称"></td></tr>
        <tr><td class="leaf">过梁</td><td><input type="checkbox" aria-label="过梁 图元"></td><td><input type="checkbox" aria-label="过梁 名称"></td></tr>
        <tr><td class="leaf end">壁龛</td><td><input type="checkbox" aria-label="壁龛 图元"></td><td><input type="checkbox" aria-label="壁龛 名称"></td></tr>
        <tr><td class="node"><div><button class="fold" aria-label="折叠"></button>梁</div></td><td><input type="checkbox" class="part" aria-label="梁组 图元"></td><td><input type="checkbox" aria-label="梁组 名称"></td></tr>
        <tr><td class="leaf">梁</td><td class="cur"><input type="checkbox" checked aria-label="梁 图元"></td><td><input type="checkbox" aria-label="梁 名称"></td></tr>
        <tr><td class="leaf">连梁</td><td><input type="checkbox" aria-label="连梁 图元"></td><td><input type="checkbox" aria-label="连梁 名称"></td></tr>
        <tr><td class="leaf end">圈梁</td><td><input type="checkbox" checked aria-label="圈梁 图元"></td><td><input type="checkbox" aria-label="圈梁 名称"></td></tr>
        <tr><td class="node"><div><button class="fold" aria-label="折叠"></button>板</div></td><td><input type="checkbox" aria-label="板 图元"></td><td><input type="checkbox" aria-label="板 名称"></td></tr>
        <tr><td class="leaf">现浇板</td><td><input type="checkbox" aria-label="现浇板 图元"></td><td><input type="checkbox" aria-label="现浇板 名称"></td></tr>
        <tr><td class="leaf">螺旋板</td><td><input type="checkbox" aria-label="螺旋板 图元"></td><td><input type="checkbox" aria-label="螺旋板 名称"></td></tr>
        <tr><td class="leaf">柱帽</td><td><input type="checkbox" aria-label="柱帽 图元"></td><td><input type="checkbox" aria-label="柱帽 名称"></td></tr>
        </tbody>
      </table>
      <i class="bar"></i>
    </div>
    <div class="dfoot"><button>恢复默认设置</button></div>
  </aside>
</main>

<footer class="status">
  <div class="s-xyz"><span>X</span><span>=</span><span>117861</span><span>Y</span><span>=</span><span>-48389</span><span>Z</span><span>=</span><span>51591</span></div>
  <span class="s-h">层高： 3</span>
  <span class="s-e">标高： 8.97~11.97</span>
  <span class="s-n">0</span>
  <span class="s-hid">隐藏：0</span>
  <div class="sbtns">
    <button aria-label="正交" class="sq"><svg width="20" height="20"><path d="M4 2v15h14M4 11h5v6" fill="none" stroke="#444" stroke-width="1.500"/></svg></button>
    <button aria-label="捕捉" class="drop act"><svg width="20" height="20"><path d="M3 3h14v15H3z" fill="#fff" stroke="#3f87dc" stroke-width="1.500"/><path d="M0 0h6v6H0z" fill="#f5853f"/></svg></button>
    <button aria-label="交点" class="sq"><svg width="20" height="20"><path d="M1 1l18 18M19 1L1 19" stroke="#8b8b8b"/></svg></button>
    <button aria-label="角度" class="drop"><svg width="20" height="20"><path d="M16 2L2 17h16M9 10q4 2 3 7" fill="none" stroke="#444" stroke-width="1.500"/></svg></button>
    <button aria-label="输入" class="drop"><svg width="20" height="20"><path d="M4 1v8M0 5h8" stroke="#444" stroke-width="1.500"/><path d="M8 11h11v6H8z" fill="#444"/></svg></button>
    <button class="txt">跨图层选择</button>
    <button class="txt">折线选择</button>
  </div>
  <span class="s-tip">选择要平移的图元,右键确认</span>
  <span class="s-fps">142.857 FPS</span>
</footer>
<div class="taskbar"><i></i><span>10:44 周</span></div>
</body>
</html>
```
FILE: styles.css
```css
* { box-sizing: border-box; }
body {
  margin: 0; height: 100vh; overflow: hidden; display: flex; flex-direction: column;
  font: 15px/20px "Noto Sans", "Noto Sans CJK SC", sans-serif; color: #111; background: #fff;
}
button { font: inherit; color: inherit; background: none; border: 0; padding: 0; margin: 0; display: flex; align-items: center; white-space: nowrap; }
input, select { font: inherit; color: inherit; margin: 0; }
svg { display: block; flex: none; }
h1, h2, ul { margin: 0; padding: 0; font: inherit; list-style: none; }
table { border-collapse: separate; border-spacing: 0; table-layout: fixed; }
.defs { position: absolute; width: 0; height: 0; }

.drop::after, .more::after, .help::after {
  content: ""; border: 4px solid transparent; border-top: 5px solid #666; border-bottom: 0; margin-left: 4px; flex: none;
}
.off { color: #b0b0b0; }
.off::after { border-top-color: #bbb; }

/* title bar and tabs */
.top { display: flex; height: 52px; flex: none; }
.logo { width: 57px; padding-left: 10px; border-right: 1px solid #e6e6e6; }
.corner { align-self: flex-end; }
.topmain { flex: 1; min-width: 0; border-bottom: 1px solid #d4d6d8; display: flex; flex-direction: column; }
.titlebar { height: 28px; display: flex; align-items: center; padding: 0 16px 2px 12px; }
.qat { flex: 1 1 0; display: flex; align-items: center; gap: 11px; }
.qat svg { width: 18px; height: 18px; }
.qat .drop::after { margin-left: 1px; }
.customize { width: 8px; height: 9px; border-top: 1px solid #555; }
.customize::after { content: ""; border: 4px solid transparent; border-top: 5px solid #555; border-bottom: 0; }
.title { flex: none; }
.winctl { flex: 1 1 54px; display: flex; justify-content: flex-end; gap: 29px; }
.tabrow { flex: 1; display: flex; justify-content: space-between; padding-left: 5px; }
.tabs { display: flex; }
.tabs a { padding: 1px 16px 0; line-height: 22px; color: #333; text-decoration: none; }
.tabs .on { background: #5aa9fb; color: #fff; }
.tools { display: flex; align-items: center; gap: 10px; padding: 0 8px 2px 0; }
.ask { width: 305px; height: 21px; border: 1px solid #bfc3c6; display: flex; align-items: center; padding-right: 6px; margin-right: 2px; }
.ask input { flex: 1; min-width: 0; border: 0; padding: 0; height: 19px; font-size: 14px; color: #444; }
.help { font-size: 20px; color: #8f8f8f; }
.help::after { margin-left: 2px; border-top-color: #aaa; }

/* ribbon */
.ribbon { flex: none; height: 120px; display: flex; padding-top: 2px; background: linear-gradient(#fff 50%, #e3e9ea); position: relative; }
.group { border-right: 1px solid #c9cdd0; margin-bottom: 4px; padding: 0 13px 0 12px; display: flex; flex-direction: column; align-items: center; }
.cells { display: flex; gap: 14px; height: 86px; align-self: flex-start; }
.col { display: flex; flex-direction: column; }
.col button { height: 29px; gap: 4px; }
.col svg { width: 20px; height: 20px; }
.big { flex-direction: column; padding-top: 5px; min-width: 38px; gap: 6px; }
.pick { padding-right: 16px; }
.pick .cells { gap: 13px; padding-left: 4px; }
.cad { padding-right: 18px; }
.common .col:last-child { margin-left: -7px; }
.modify { padding-right: 10px; }
.cap { height: 32px; line-height: 32px; gap: 4px; }
.draw .cells { gap: 13px; }
.edit .cells { gap: 7px; }
.edit { padding-left: 9px; }
.edit .col + .col { margin-left: 2px; }
.more::after { margin: 0; }
.meter { position: absolute; right: 2px; top: 45px; width: 11px; height: 72px; background: #666; border-radius: 4px; padding: 20px 1px 4px; }
.meter i { display: block; height: 100%; background: repeating-linear-gradient(#2fd65f 0 3px, #555 3px 4px); }

/* selectors row */
.combos { flex: none; height: 35px; background: #c9ccd1; border-top: 2px solid #9a9fa3; border-bottom: 2px solid #a9afb4; display: flex; align-items: center; gap: 1px; padding-left: 2px; }
.combos label { width: 124px; height: 27px; background: #fff; border: 1px solid #a9adb2; display: flex; align-items: center; padding-right: 6px; }
.combos label::after { content: ""; border: 4px solid transparent; border-top: 5px solid #555; border-bottom: 0; margin-left: 3px; }
.combos select { flex: 1; min-width: 0; appearance: none; border: 0; background: none; padding: 0 0 0 4px; text-overflow: clip; }

/* work area */
.work { flex: 1; min-height: 0; display: flex; }
.panel { background: #eee; border: 1px solid #c8cacd; border-top: 0; position: relative; display: flex; flex-direction: column; overflow: hidden; }
.strip { flex: none; height: 15px; background: #d2d4d9; border-bottom: 1px solid #c0c3c7; display: flex; justify-content: flex-end; align-items: center; padding-right: 6px; }
.phead { flex: none; height: 27px; line-height: 26px; padding-left: 11px; color: #777; border-bottom: 1px solid #c8cbcf; }
.bar { position: absolute; width: 10px; border-radius: 5px; background: #c9c9c9; }

.nav { width: 263px; flex: none; }
.ntools { flex: none; height: 35px; display: flex; align-items: center; gap: 5px; padding: 0 2px 0 9px; border-bottom: 1px solid #c8cbcf; }
.plus { margin-right: auto; }
.tg { width: 30px; height: 27px; border: 1px solid #5aa9fb; border-radius: 4px; background: #e6f2ff; justify-content: center; }
.tree { flex: 1; min-height: 0; overflow: hidden; background: #fff; padding-top: 5px; }
.tree li { height: 26px; margin: 0 73px 4px 50px; padding-left: 4px; display: flex; align-items: center; gap: 7px; white-space: nowrap; }
.tree li svg { width: 20px; height: 20px; }
.tree .dir { margin-left: 0; padding-left: 3px; gap: 6px; }
.tree .dir svg { height: 16px; }
.tree .sel { background: #c8d8ef; }
.nav .bar { right: 5px; top: 194px; height: 275px; }

.mid { width: 350px; flex: none; margin-left: 5px; display: flex; flex-direction: column; gap: 6px; }
.list { height: 223px; flex: none; }
.ptabs { flex: none; height: 29px; display: flex; border-bottom: 1px solid #c8cbcf; }
.ptabs button { width: 81px; justify-content: center; border-right: 1px solid #c8cbcf; background: #ddd; color: #777; }
.ptabs .on { background: #eee; color: #222; font-weight: 500; }
.ltools { flex: none; height: 35px; display: flex; align-items: center; gap: 12px; padding: 0 4px 0 7px; color: #333; border-bottom: 1px solid #c8cbcf; }
.ltools button { gap: 4px; }
.ltools svg { width: 18px; height: 18px; }
.ltools .over { margin-left: auto; }
.ltools .over svg { width: 10px; height: 9px; }
.find { flex: none; height: 24px; background: #fff; border-bottom: 1px solid #c8cbcf; display: flex; align-items: center; padding: 0 9px 0 2px; }
.find input { flex: 1; border: 0; padding: 0; height: 22px; }
.find input::placeholder { color: #777; }
.items { flex: 1; background: #fff; padding-top: 4px; }
.items li { height: 26px; line-height: 26px; margin: 0 97px 4px 50px; padding-left: 4px; white-space: nowrap; }
.items .sel { background: #b3cdec; }
.list .bar { right: 4px; top: 187px; height: 18px; }

.props { flex: 1; min-height: 0; }
.scroll { flex: 1; min-height: 0; overflow: hidden; background: #fff; }
.props .bar { right: 4px; top: 144px; height: 244px; }
.ptable { width: 329px; }
.c1 { width: 27px; } .c2 { width: 126px; } .c3 { width: 124px; } .c4 { width: 52px; }
th, td { padding: 0; height: 26px; line-height: 20px; font-weight: 400; border-right: 1px solid #d6d6d6; border-bottom: 1px solid #d6d6d6; white-space: nowrap; overflow: hidden; text-align: left; }
.ptable thead th { height: 25px; }
tbody tr:nth-child(4n) td { height: 27px; }
th { background: #eee; color: #444; text-align: center; }
.ptable td { padding-left: 4px; }
td input { vertical-align: middle; }
.ptable td:last-child, .dtable td + td { text-align: center; padding: 0; line-height: 0; }
.b { color: #2a62f0; }
.ro { background: #e9e9e9; color: #8c8c8c; }
.hot { background: #80bbfa; color: #fff; font-weight: 700; }
.cur { outline: 2px solid #808080; outline-offset: -2px; }
.par div, .node div { display: flex; align-items: center; gap: 8px; }
.fold { width: 16px; height: 16px; border: 1px solid #888; border-radius: 2px; background: #fff; justify-content: center; }
.fold::after { content: ""; width: 6px; height: 1px; background: #333; }
.ptable .par { padding-left: 3px; }
.ptable .kid { padding-left: 40px; background: linear-gradient(#ddd, #ddd) 11px 0/1px 100% no-repeat, linear-gradient(#ddd, #ddd) 11px 50%/20px 1px no-repeat; }

input[type="checkbox"] { appearance: none; width: 18px; height: 17px; border: 1px solid #8a8a8a; border-radius: 3px; background: #fff; display: inline-flex; align-items: center; justify-content: center; }
input[type="checkbox"]:checked { background: #4fa0fb; border-color: #4fa0fb; }
input[type="checkbox"]:checked::after { content: ""; width: 10px; height: 6px; border: solid #fff; border-width: 0 0 2px 2px; transform: rotate(-45deg); margin-bottom: 3px; }
.part::after { content: ""; width: 12px; height: 12px; border: 1px solid #4fa0fb; border-radius: 2px; background: #9cc8fb; }

.grip { flex: none; width: 5px; height: 124px; margin-top: 332px; background: #5f6a75; }
.view { flex: 1; min-width: 0; position: relative; overflow: hidden; }
.scene { width: 100%; height: 100%; }
.axis { font-size: 18px; }
.vtools { position: absolute; right: 0; top: 0; width: 41px; height: 284px; background: #94979b; border: 1px solid #b4b8bb; border-radius: 3px; display: flex; flex-direction: column; align-items: center; padding-top: 12px; gap: 6px; }
.two { width: 30px; height: 30px; background: #8499b3; border: 1px solid #3d4a5a; color: #26313f; font-size: 11px; line-height: 14px; align-items: flex-end; justify-content: flex-end; padding-right: 3px; }
.v { flex-direction: column; gap: 9px; height: 43px; }
.v::after { content: ""; border: 4px solid transparent; border-top: 5px solid #26313f; border-bottom: 0; }
.last { border-top: 1px solid #666; padding-top: 6px; }

/* display settings */
.disp { width: 351px; flex: none; background: #fff; }
.disp .phead, .dtabs { background: #eee; }
.dtabs { flex: none; height: 35px; display: flex; align-items: flex-end; gap: 4px; padding-left: 3px; border-bottom: 1px solid #c8cbcf; color: #555; }
.dtabs button { width: 92px; height: 28px; justify-content: center; background: #ddd; border-radius: 4px 4px 0 0; }
.dtabs .on { width: 95px; height: 31px; background: #fff; border: 1px solid #c8cbcf; border-bottom: 0; color: #2f86ea; margin-bottom: -1px; }
.dbox { flex: 1; min-height: 0; overflow: hidden; position: relative; background: #fff; border: solid #c8cacd; border-width: 1px 1px 1px 2px; margin: 3px 3px 0; }
.dtable { width: 322px; }
.d1 { width: 164px; } .d2 { width: 79px; }
.leaf { background: linear-gradient(#e2e2e2, #e2e2e2) 10px 0/1px 100% no-repeat, linear-gradient(#ddd, #ddd) 22px 0/1px 100% no-repeat, linear-gradient(#ddd, #ddd) 22px 50%/20px 1px no-repeat; }
.leaf.end { background-size: 1px 100%, 1px 50%, 20px 1px; }
.dtable .leaf { padding-left: 50px; }
.node { background: linear-gradient(#e2e2e2, #e2e2e2) 10px 0/1px 100% no-repeat; }
.dtable .node { padding-left: 14px; }
.dbox .bar { right: 3px; top: 82px; height: 121px; }
.dfoot { flex: none; height: 48px; display: flex; justify-content: flex-end; align-items: center; padding-right: 10px; }
.dfoot button { height: 33px; padding: 0 11px; border: 1px solid #cfcfcf; border-radius: 4px; background: #fff; }

/* status bar */
.status { flex: none; height: 37px; background: #dedee0; display: flex; align-items: center; color: #444; white-space: nowrap; padding: 0 14px 0 2px; }
.s-xyz { width: 329px; display: flex; gap: 7px; } .s-h { width: 104px; } .s-e { width: 166px; } .s-n { width: 129px; } .s-hid { width: 129px; }
.sbtns { display: flex; gap: 4px; }
.sbtns button { height: 31px; width: 45px; border: 1px solid #a9a9ab; background: #cfcfd1; justify-content: center; }
.sbtns .sq { width: 32px; }
.sbtns .act { background: #fff; border: 2px solid #5aa9fb; }
.sbtns .txt { width: auto; padding: 0 8px; }
.s-tip { padding-left: 7px; color: #222; }
.s-fps { margin-left: auto; }
.taskbar { flex: none; height: 11px; overflow: hidden; background: linear-gradient(90deg, #e8e2da, #ece4da 60%, #d9dad6 85%, #e6dcd2); border-top: 1px solid #fff; display: flex; justify-content: space-between; padding: 0 92px 0 464px; }
.taskbar i { width: 61px; background: #f6f4f1; }
.taskbar span { padding-top: 3px; }
```
